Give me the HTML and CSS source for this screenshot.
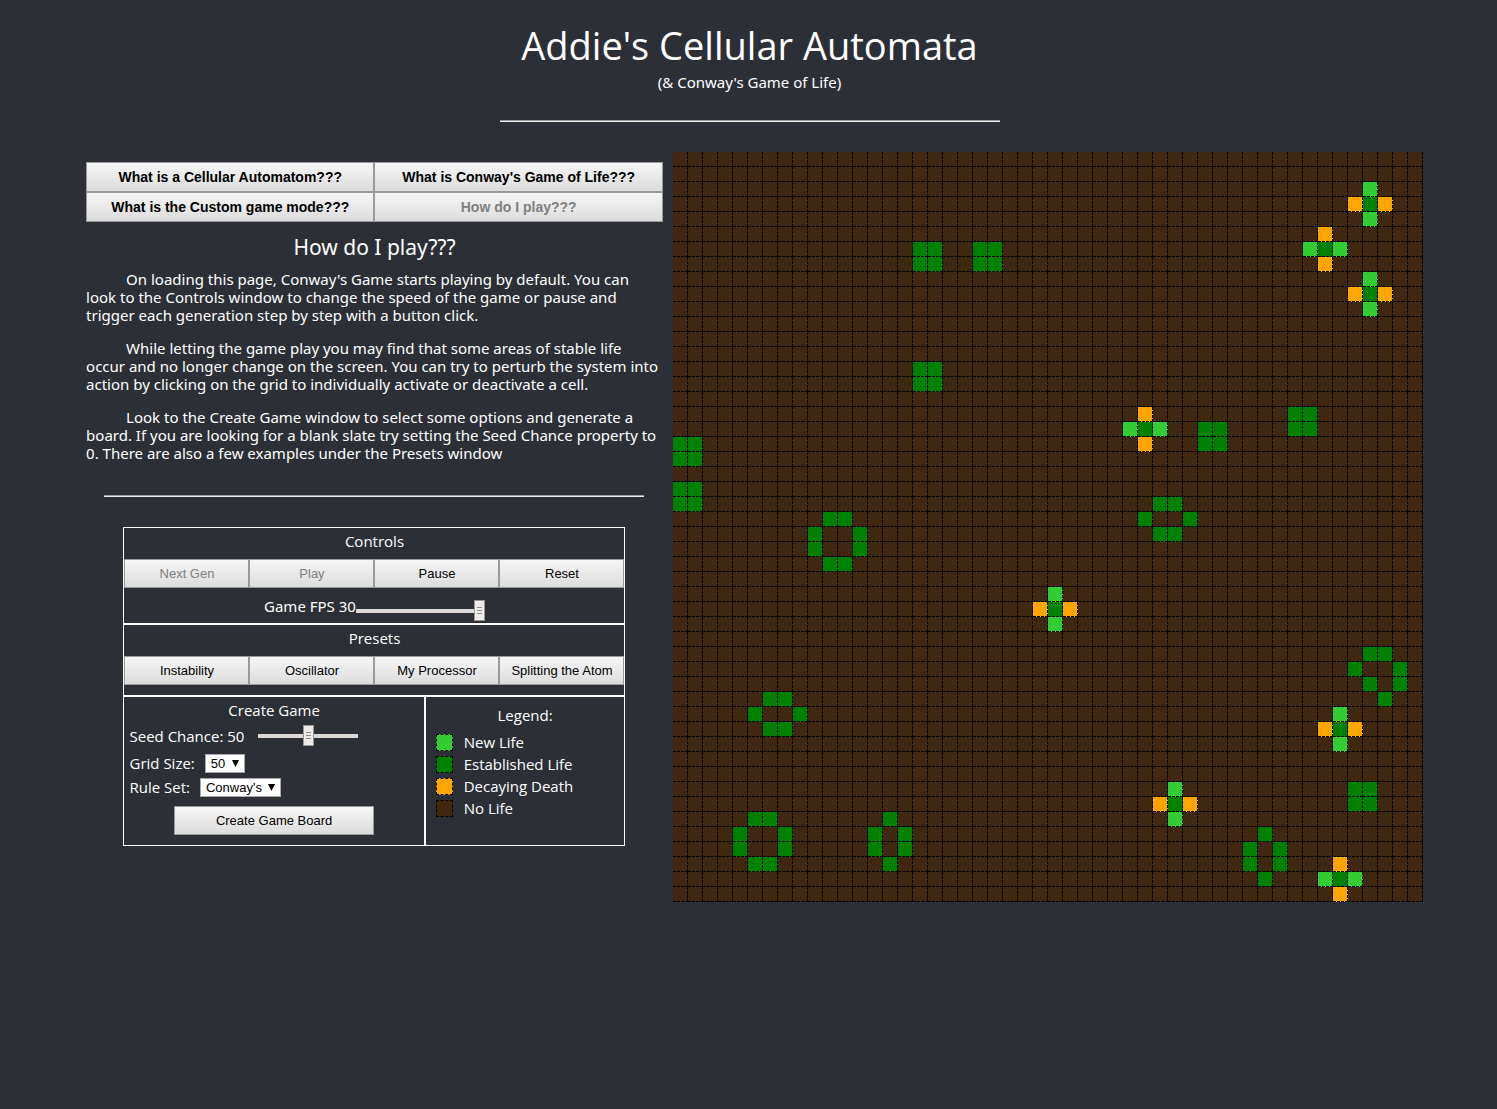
FILE: index.html
```html
<!DOCTYPE html>
<html lang="en">
<head>
<meta charset="utf-8">
<meta name="viewport" content="width=device-width, initial-scale=1">
<title>Addie's Cellular Automata</title>
<link rel="stylesheet" href="styles.css">
</head>
<body>
<header class="site-header">
  <h1 class="title">Addie's Cellular Automata</h1>
  <p class="subtitle">(&amp; Conway's Game of Life)</p>
  <hr class="rule header-rule">
</header>
<main class="layout">
  <div class="sidebar">
    <nav class="topics">
      <button class="btn topic" type="button">What is a Cellular Automatom???</button>
      <button class="btn topic" type="button">What is Conway's Game of Life???</button>
      <button class="btn topic" type="button">What is the Custom game mode???</button>
      <button class="btn topic" type="button" disabled>How do I play???</button>
    </nav>
    <article class="help">
      <h2 class="help-title">How do I play???</h2>
      <p class="help-text">On loading this page, Conway's Game starts playing by default. You can look to the Controls window to change the speed of the game or pause and trigger each generation step by step with a button click.</p>
      <p class="help-text">While letting the game play you may find that some areas of stable life occur and no longer change on the screen. You can try to perturb the system into action by clicking on the grid to individually activate or deactivate a cell.</p>
      <p class="help-text">Look to the Create Game window to select some options and generate a board. If you are looking for a blank slate try setting the Seed Chance property to 0. There are also a few examples under the Presets window</p>
    </article>
    <hr class="rule sidebar-rule">
    <div class="panels">
      <section class="panel controls">
        <h3 class="panel-title">Controls</h3>
        <div class="button-row">
          <button class="btn" type="button" disabled>Next Gen</button>
          <button class="btn" type="button" disabled>Play</button>
          <button class="btn" type="button">Pause</button>
          <button class="btn" type="button">Reset</button>
        </div>
        <div class="speed">
          <label for="fps">Game FPS 30</label>
          <input class="slider speed-slider" id="fps" type="range" min="1" max="30" value="30">
        </div>
      </section>
      <section class="panel presets">
        <h3 class="panel-title">Presets</h3>
        <div class="button-row">
          <button class="btn" type="button">Instability</button>
          <button class="btn" type="button">Oscillator</button>
          <button class="btn" type="button">My Processor</button>
          <button class="btn" type="button">Splitting the Atom</button>
        </div>
      </section>
      <div class="panel-pair">
        <section class="panel create">
          <h3 class="create-title">Create Game</h3>
          <div class="field seed-field">
            <label for="seed">Seed Chance: 50</label>
            <input class="slider seed-slider" id="seed" type="range" min="0" max="100" value="50">
          </div>
          <div class="field">
            <label for="size">Grid Size:</label>
            <select class="select" id="size"><option>50</option></select>
          </div>
          <div class="field">
            <label for="rules">Rule Set:</label>
            <select class="select" id="rules"><option>Conway's</option></select>
          </div>
          <button class="btn create-btn" type="button">Create Game Board</button>
        </section>
        <section class="panel legend">
          <h3 class="legend-title">Legend:</h3>
          <ul class="legend-list">
            <li class="legend-item"><span class="swatch new"></span>New Life</li>
            <li class="legend-item"><span class="swatch alive"></span>Established Life</li>
            <li class="legend-item"><span class="swatch dying"></span>Decaying Death</li>
            <li class="legend-item"><span class="swatch"></span>No Life</li>
          </ul>
        </section>
      </div>
    </div>
  </div>
  <div class="board" id="board"></div>
</main>
<script src="game.js"></script>
</body>
</html>
```

FILE: styles.css
```css
* {
  box-sizing: border-box;
}

body {
  margin: 0;
  background: #2c3036;
  color: #fff;
  font-family: "Segoe UI", "Open Sans", sans-serif;
  font-size: 15px;
  line-height: 18px;
}

h1, h2, h3, p, ul {
  margin: 0;
  padding: 0;
  font-weight: 400;
}

.site-header {
  padding: 20px 0 0 2px;
  text-align: center;
}

.title {
  margin-bottom: 2px;
  font-size: 38px;
  line-height: 50px;
}

.subtitle {
  font-family: "Segoe UI", "Noto Sans", sans-serif;
  line-height: 20px;
}

.rule {
  height: 2px;
  border: 0;
  border-top: 1px solid #9a9a9a;
  border-bottom: 1px solid #eee;
}

.header-rule {
  width: 500px;
  max-width: 100%;
  margin: 28px auto 30px;
}

.layout {
  display: flex;
  justify-content: center;
  align-items: flex-start;
}

.sidebar {
  width: 40%;
  padding: 10px 10px 0 12px;
}

.topics {
  display: grid;
  grid-template-columns: 1fr 1fr;
}

.btn {
  height: 30px;
  padding: 0;
  border: 1px solid #999;
  border-radius: 0;
  background: linear-gradient(#f6f6f6, #dcdcdc);
  color: #000;
  font: 13px "Liberation Sans", Arial, sans-serif;
}

.btn:disabled {
  color: #808080;
}

.topic {
  font-size: 14px;
  font-weight: 700;
}

.help {
  font-family: "Segoe UI", "Noto Sans", sans-serif;
}

.help-title {
  margin: 10px 0 8px;
  text-align: center;
  font-size: 21px;
  line-height: 30px;
}

.help-text {
  margin-bottom: 15px;
  padding-right: 3px;
  text-indent: 40px;
}

.sidebar-rule {
  width: 540px;
  max-width: 100%;
  margin: 33px auto 30px;
}

.panels {
  max-width: 502px;
  margin: 0 auto;
}

.panel {
  border: 1px solid #fff;
}

.panel-title {
  padding: 4px 0 9px;
  text-align: center;
  font-size: 15px;
}

.button-row {
  display: grid;
  grid-template-columns: repeat(4, 1fr);
}

.button-row .btn,
.create-btn {
  height: 29px;
}

.speed {
  display: flex;
  justify-content: center;
  align-items: flex-start;
  height: 35px;
  padding-top: 9px;
  font-family: "Segoe UI", "Noto Sans", sans-serif;
}

.slider {
  appearance: none;
  height: 21px;
  margin: 0;
  background: transparent;
}

.slider::-webkit-slider-runnable-track {
  height: 4px;
  background: #ddd9d6;
}

.slider::-webkit-slider-thumb {
  appearance: none;
  width: 11px;
  height: 21px;
  margin-top: -9px;
  border: 1px solid #9a9590;
  background:
    repeating-linear-gradient(#8e8a86 0 1px, transparent 1px 3px) center / 5px 7px no-repeat,
    #eeebe9;
}

.speed-slider {
  width: 129px;
  margin-top: 3px;
}

.presets {
  padding-bottom: 10px;
}

.panel-pair {
  display: grid;
  grid-template-columns: 3fr 2fr;
}

.create {
  display: flex;
  flex-direction: column;
  padding: 4px 5px 10px;
}

.create-title,
.legend-title {
  text-align: center;
  font-size: 15px;
}

.create-title {
  margin-bottom: 2px;
}

.field {
  display: flex;
  align-items: center;
  gap: 10px;
  height: 24px;
}

.seed-field {
  height: 30px;
  gap: 14px;
}

.seed-slider {
  width: 100px;
}

.select {
  appearance: none;
  height: 19px;
  padding: 0 18px 0 5px;
  border: 1px solid #a9a9a9;
  border-radius: 0;
  background: #fff url("data:image/svg+xml,%3Csvg xmlns='http://www.w3.org/2000/svg' width='7' height='7'%3E%3Cpath d='M0 0h7L3.500 7z'/%3E%3C/svg%3E") right 5px center no-repeat;
  color: #000;
  font: 13px "Liberation Sans", Arial, sans-serif;
}

.create-btn {
  width: 200px;
  margin: 7px auto 0;
}

.legend {
  padding: 9px 10px;
}

.legend-list {
  padding-top: 7px;
  list-style: none;
}

.legend-item {
  display: flex;
  align-items: center;
  gap: 11px;
  height: 22px;
}

.swatch {
  width: 17px;
  height: 17px;
  border: 1px dashed #000;
  background: #402810;
}

.board {
  display: grid;
  flex: none;
  grid-template-columns: repeat(50, 15px);
  grid-auto-rows: 15px;
}

.cell {
  border-right: 1px dashed #000;
  border-bottom: 1px dashed #000;
  background: #402810;
}

.new {
  background: #32cd32;
}

.alive {
  background: #008000;
}

.dying {
  background: #ffa500;
}
```

FILE: game.js
```js
const SIZE = 50;
const state = new Map();

function put(type, col, row, offsets) {
  offsets.forEach(([dx, dy]) => state.set((row + dy) * SIZE + col + dx, type));
}

const BLOCK = [[0, 0], [1, 0], [0, 1], [1, 1]];
const BEEHIVE_WIDE = [[1, 0], [2, 0], [0, 1], [3, 1], [1, 2], [2, 2]];
const BEEHIVE_TALL = [[1, 0], [0, 1], [2, 1], [0, 2], [2, 2], [1, 3]];
const POND = [[1, 0], [2, 0], [0, 1], [3, 1], [0, 2], [3, 2], [1, 3], [2, 3]];
const LOAF = [[1, 0], [2, 0], [0, 1], [3, 1], [1, 2], [3, 2], [2, 3]];
const UPRIGHT = [[0, -1], [0, 1]];
const LEVEL = [[-1, 0], [1, 0]];

[[16, 6], [20, 6], [16, 14], [41, 17], [35, 18], [0, 19], [0, 22], [45, 42]]
  .forEach(([c, r]) => put("alive", c, r, BLOCK));
[[31, 23], [5, 36]].forEach(([c, r]) => put("alive", c, r, BEEHIVE_WIDE));
[[13, 44], [38, 45]].forEach(([c, r]) => put("alive", c, r, BEEHIVE_TALL));
[[9, 24], [4, 44]].forEach(([c, r]) => put("alive", c, r, POND));
put("alive", 45, 33, LOAF);

function blinker(col, row, born, died) {
  put("alive", col, row, [[0, 0]]);
  put("new", col, row, born);
  put("dying", col, row, died);
}

[[46, 3], [46, 9], [25, 30], [44, 38], [33, 43]]
  .forEach(([c, r]) => blinker(c, r, UPRIGHT, LEVEL));
[[43, 6], [31, 18], [44, 48]]
  .forEach(([c, r]) => blinker(c, r, LEVEL, UPRIGHT));

const board = document.getElementById("board");
for (let i = 0; i < SIZE * SIZE; i++) {
  const cell = document.createElement("div");
  cell.className = state.has(i) ? "cell " + state.get(i) : "cell";
  board.append(cell);
}
```
